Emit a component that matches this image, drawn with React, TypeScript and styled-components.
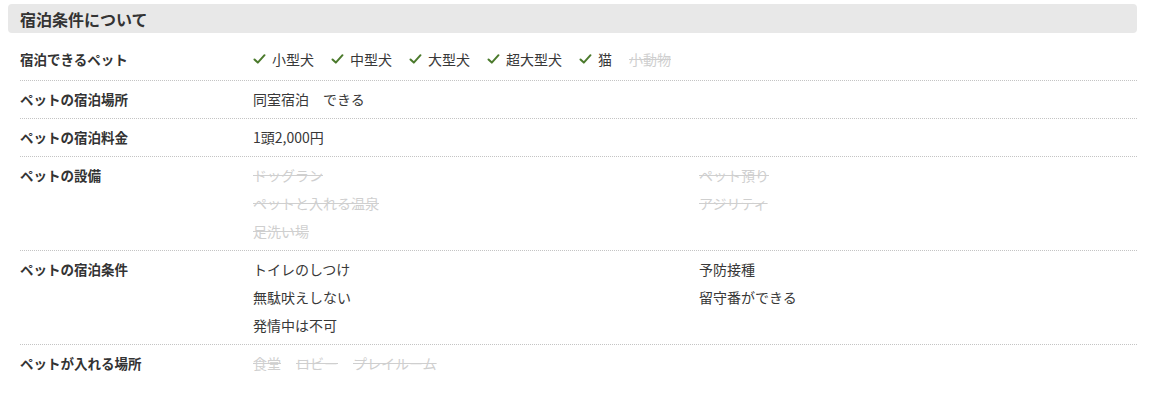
import styled, { createGlobalStyle } from "styled-components";

const GlobalStyle = createGlobalStyle`
  body {
    margin: 0;
    background: #fff;
    font-family: "Noto Sans CJK JP", "Noto Sans", sans-serif;
    color: #333;
  }
`;

const Section = styled.section`
  padding: 4px 13px 0 8px;
`;

const Heading = styled.h2`
  margin: 0 0 8px;
  height: 29px;
  padding: 0 12px;
  display: flex;
  align-items: center;
  background: #e8e8e8;
  border-radius: 4px;
  font-size: 16px;
  font-weight: 700;
  color: #333;
`;

const Table = styled.dl`
  margin: 0 0 0 12px;
`;

const Row = styled.div`
  display: grid;
  grid-template-columns: 233px 1fr;
  padding: 8px 0 9px;
  border-bottom: 1px dotted #c4c4c4;
  &:first-child {
    padding-bottom: 11px;
  }
  &:last-child {
    border-bottom: none;
  }
`;

const Label = styled.dt`
  margin: 0;
  font-size: 13.5px;
  font-weight: 700;
  line-height: 20px;
  color: #333;
`;

const Value = styled.dd<{ $columns?: boolean; $gap?: number }>`
  margin: 0;
  display: ${(p) => (p.$columns ? "grid" : "flex")};
  grid-template-columns: 446px 1fr;
  flex-wrap: wrap;
  column-gap: ${(p) => (p.$columns ? 0 : p.$gap ?? 16)}px;
  row-gap: 8px;
  font-size: 14px;
  line-height: 20px;
`;

const Item = styled.span<{ $off?: boolean }>`
  display: inline-flex;
  align-items: center;
  gap: 6px;
  color: ${(p) => (p.$off ? "#cfcfcf" : "#383838")};
  text-decoration: ${(p) => (p.$off ? "line-through" : "none")};
`;

const Check = () => (
  <svg width="13" height="12" viewBox="0 0 13 12" aria-hidden="true">
    <path
      d="M1.5 6.5 L4.8 9.6 L11.5 2.2"
      fill="none"
      stroke="#4b7a2c"
      strokeWidth="2"
      strokeLinecap="round"
      strokeLinejoin="round"
    />
  </svg>
);

type Entry = { text: string; off?: boolean };

const pets: Entry[] = [
  { text: "小型犬" },
  { text: "中型犬" },
  { text: "大型犬" },
  { text: "超大型犬" },
  { text: "猫" },
  { text: "小動物", off: true },
];

const facilities: Entry[] = [
  { text: "ドッグラン", off: true },
  { text: "ペット預り", off: true },
  { text: "ペットと入れる温泉", off: true },
  { text: "アジリティ", off: true },
  { text: "足洗い場", off: true },
];

const conditions: Entry[] = [
  { text: "トイレのしつけ" },
  { text: "予防接種" },
  { text: "無駄吠えしない" },
  { text: "留守番ができる" },
  { text: "発情中は不可" },
];

const places: Entry[] = [
  { text: "食堂", off: true },
  { text: "ロビー", off: true },
  { text: "プレイルーム", off: true },
];

export default function App() {
  return (
    <>
      <GlobalStyle />
      <Section>
        <Heading>宿泊条件について</Heading>
        <Table>
          <Row>
            <Label>宿泊できるペット</Label>
            <Value $gap={17}>
              {pets.map((p) => (
                <Item key={p.text} $off={p.off}>
                  {!p.off && <Check />}
                  {p.text}
                </Item>
              ))}
            </Value>
          </Row>
          <Row>
            <Label>ペットの宿泊場所</Label>
            <Value $gap={14}>
              <Item>同室宿泊</Item>
              <Item>できる</Item>
            </Value>
          </Row>
          <Row>
            <Label>ペットの宿泊料金</Label>
            <Value>
              <Item>1頭2,000円</Item>
            </Value>
          </Row>
          <Row>
            <Label>ペットの設備</Label>
            <Value $columns>
              {facilities.map((f) => (
                <Item key={f.text} $off={f.off}>
                  {f.text}
                </Item>
              ))}
            </Value>
          </Row>
          <Row>
            <Label>ペットの宿泊条件</Label>
            <Value $columns>
              {conditions.map((c) => (
                <Item key={c.text}>{c.text}</Item>
              ))}
            </Value>
          </Row>
          <Row>
            <Label>ペットが入れる場所</Label>
            <Value $gap={15}>
              {places.map((p) => (
                <Item key={p.text} $off={p.off}>
                  {p.text}
                </Item>
              ))}
            </Value>
          </Row>
        </Table>
      </Section>
    </>
  );
}
